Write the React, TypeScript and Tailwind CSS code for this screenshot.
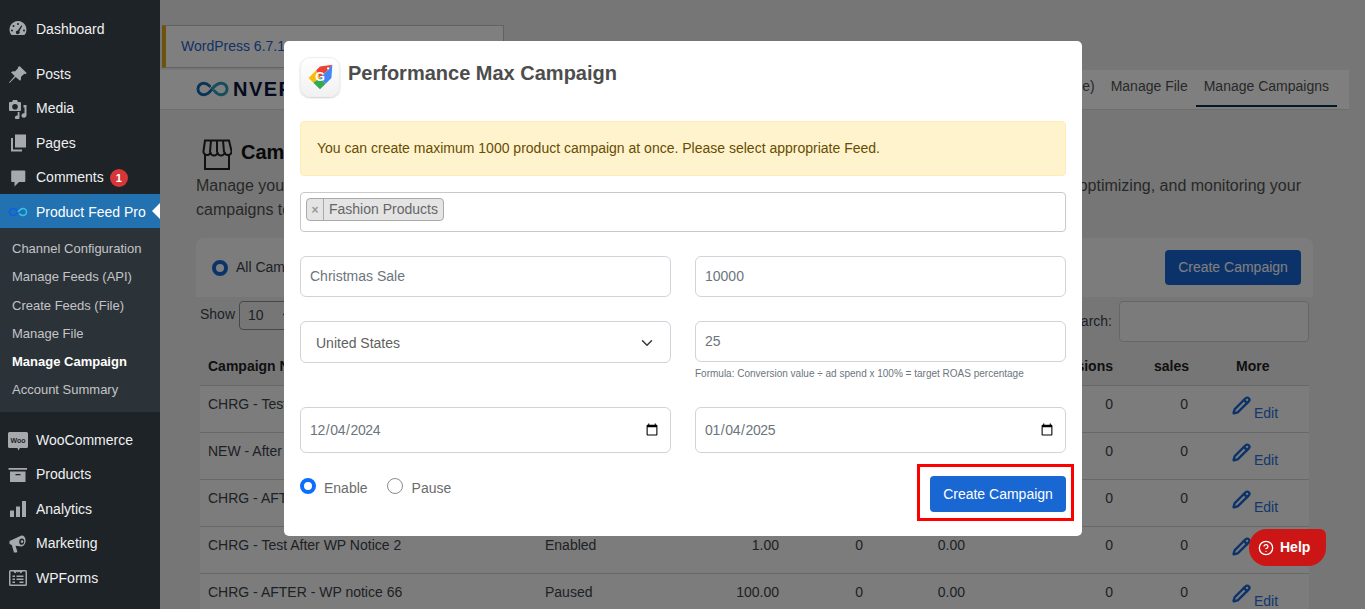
import { ChevronDown, CircleHelp, Pencil } from "lucide-react";
import { ReactNode } from "react";

const sans = "font-['Liberation_Sans',Arial,sans-serif]";

function DashIcon({ children }: { children: ReactNode }) {
  return (
    <svg viewBox="0 0 20 20" className="h-5 w-5 fill-[#a7aaad]">
      {children}
    </svg>
  );
}

const icons: Record<string, ReactNode> = {
  dashboard: (
    <DashIcon>
      <path
        fillRule="evenodd"
        d="M10 2a8.500 8.500 0 0 0-7.400 12.700c.4.700 1 1.300 1.800 1.300h11.200c.8 0 1.400-.6 1.800-1.300A8.500 8.500 0 0 0 10 2zM10 4a1 1 0 1 1 0 2 1 1 0 0 1 0-2zM5.500 6a1 1 0 1 1 0 2 1 1 0 0 1 0-2zM4 10.500a1 1 0 1 1 0 2 1 1 0 0 1 0-2zM16 10.500a1 1 0 1 1 0 2 1 1 0 0 1 0-2zM13.400 6.200l.9.500-2.900 5.600a1.900 1.900 0 1 1-1.600-.9z"
      />
    </DashIcon>
  ),
  posts: (
    <DashIcon>
      <path d="M11.800 1.200l6.900 6.900-1.400 1.100-1-.5-3.400 3.300c.4 1.400.1 2.800-.9 3.800L7.700 12.100l-6.200 6-.5-.5 5.700-6.500-3.700-3.800c1-1 2.400-1.300 3.900-.9l3.300-3.300-.5-1z" />
    </DashIcon>
  ),
  media: (
    <DashIcon>
      <path fillRule="evenodd" d="M1 3h3l1-2h4l1 2h2a1 1 0 0 1 1 1v7a1 1 0 0 1-1 1H2a1 1 0 0 1-1-1V4a1 1 0 0 1 1-1zm6 2a2.800 2.800 0 1 0 0 5.600A2.800 2.800 0 0 0 7 5z" />
      <path d="M18.500 6v10.500a2.500 2.200 0 1 1-2-2.200V8.500h-1V6zM11.500 13v5.500a2.300 1.900 0 1 1-1.800-1.900V13z" />
    </DashIcon>
  ),
  pages: (
    <DashIcon>
      <path d="M7 1.500h11v13H7zM5 5v11.500h9v2H3V5z" />
    </DashIcon>
  ),
  comments: (
    <DashIcon>
      <path d="M4 2.500h12.500a.8.800 0 0 1 .8.800v10a.8.800 0 0 1-.8.800H11l-4.500 4.500v-4.500H4a.8.800 0 0 1-.8-.8v-10a.8.800 0 0 1 .8-.8z" />
    </DashIcon>
  ),
  woo: (
    <svg viewBox="0 0 20 20" className="h-5 w-5">
      <path
        className="fill-[#a7aaad]"
        d="M1.500 1h17A1.500 1.500 0 0 1 20 2.500v13a1.500 1.500 0 0 1-1.500 1.500H12l-1.800 2.500L9.500 17h-8A1.500 1.500 0 0 1 0 15.500v-13A1.500 1.500 0 0 1 1.500 1z"
      />
      <text x="10" y="11.500" textAnchor="middle" className="fill-[#1d2327] font-['Liberation_Sans'] text-[7px] font-bold">
        Woo
      </text>
    </svg>
  ),
  products: (
    <DashIcon>
      <path fillRule="evenodd" d="M.500 3h18.500v1.800H.500zM2 6.500h15.500V17H2zM7.500 9v1.200h5V9z" />
    </DashIcon>
  ),
  analytics: (
    <DashIcon>
      <path d="M2 11.500h4V18H2zM8 7.500h4V18H8zM14 2h4v16h-4z" />
    </DashIcon>
  ),
  marketing: (
    <DashIcon>
      <path fillRule="evenodd" d="M13.500 1.500a4 5.500 10 0 1 0 11l-6-.8 1.800 5.800-.7 1H6l-2.200-7.500L1.500 10V7zM14 4.500a2.500 3.200 10 1 0 0 6.300 2.500 3.200 10 0 0 0-6.300z" />
      <circle cx="14" cy="7.600" r="1.300" />
    </DashIcon>
  ),
  wpforms: (
    <DashIcon>
      <path
        fillRule="evenodd"
        d="M2.500 2h15A1.500 1.500 0 0 1 19 3.500v13a1.500 1.500 0 0 1-1.500 1.500h-15A1.500 1.500 0 0 1 1 16.500v-13A1.500 1.500 0 0 1 2.500 2zM2.500 3.500v13h15v-13h-3l-1.500 2L11 3.500 10 4.800 9 3.500 7 5.500 5.500 3.500zM4.500 7.500V9H7V7.500zM8.500 7.500V9h7V7.500zM4.500 10.500V12H7v-1.500zM8.500 10.500V12h7v-1.500zM11.500 13.500V15h4v-1.500zM4.500 13.500V15H7v-1.500z"
      />
    </DashIcon>
  ),
};

function MenuRow({ icon, label, badge }: { icon: string; label: string; badge?: string }) {
  return (
    <div className="flex h-[34.4px] items-center pl-2 pt-[2px] text-[14px] text-[#f0f0f1]">
      <span className="flex w-[28px] shrink-0 items-center">{icons[icon]}</span>
      <span>{label}</span>
      {badge && (
        <span className="ml-[6px] flex h-[18px] w-[18px] items-center justify-center rounded-full bg-[#d63638] text-[11px] font-bold text-white">
          {badge}
        </span>
      )}
    </div>
  );
}

function Sidebar() {
  const sub = ["Channel Configuration", "Manage Feeds (API)", "Create Feeds (File)", "Manage File", "Manage Campaign", "Account Summary"];
  return (
    <aside className="flex w-[160px] shrink-0 flex-col bg-[#1d2327] pt-[11px]">
      <MenuRow icon="dashboard" label="Dashboard" />
      <div className="h-[11px]" />
      <MenuRow icon="posts" label="Posts" />
      <MenuRow icon="media" label="Media" />
      <MenuRow icon="pages" label="Pages" />
      <MenuRow icon="comments" label="Comments" badge="1" />
      <div className="relative flex h-[34.4px] items-center bg-[#2271b1] pl-2 pt-[2px] text-[14px] text-white">
        <span className="flex w-[28px] shrink-0 items-center">
          <svg viewBox="0 0 20 10" className="h-[10px] w-5" fill="none" strokeWidth="1.500">
            <path d="M9 3.500C8 2 6.500 1.500 5 1.500a3.500 3.500 0 0 0 0 7c2.500 0 4-2.300 5-3.500" stroke="#0b5fe8" />
            <path d="M10 5c1-1.200 2.500-3.500 5-3.500a3.500 3.500 0 0 1 0 7c-1.500 0-2.800-.7-3.800-2" stroke="#34c3ee" />
          </svg>
        </span>
        Product Feed Pro
        <span className="absolute right-0 top-[9px] h-0 w-0 border-y-[8px] border-r-[8px] border-y-transparent border-r-white" />
      </div>
      <div className="flex flex-col bg-[#2c3338] pb-[8px] pt-[6.800px] text-[13px] leading-[28.200px]">
        {sub.map((s) => (
          <div key={s} className={s === "Manage Campaign" ? "pl-3 font-bold text-white" : "pl-3 text-[#c3c4c7]"}>
            {s}
          </div>
        ))}
      </div>
      <div className="h-[10px]" />
      <MenuRow icon="woo" label="WooCommerce" />
      <MenuRow icon="products" label="Products" />
      <MenuRow icon="analytics" label="Analytics" />
      <MenuRow icon="marketing" label="Marketing" />
      <MenuRow icon="wpforms" label="WPForms" />
    </aside>
  );
}

const rows = [
  ["CHRG - Test After WP Notice", "Enabled", "1.00"],
  ["NEW - After WP Notice", "Enabled", "1.00"],
  ["CHRG - AFTER - WP notice", "Paused", "1.00"],
  ["CHRG - Test After WP Notice 2", "Enabled", "1.00"],
  ["CHRG - AFTER - WP notice 66", "Paused", "100.00"],
];

function Background() {
  return (
    <main className="h-full min-w-0 flex-1 bg-[#ececed] pt-[25px] text-[14px] text-[#3c434a]">
      <div className="ml-[2px] flex h-[43px] w-[342px] items-center border border-l-4 border-[#c3c4c7] border-l-[#dba617] bg-white pl-[15px] text-[#2563c8]">
        WordPress 6.7.1
      </div>
      <header className="mt-[2px] flex h-[40px] w-[1189px] items-start justify-between border-b border-[#dcdcde] bg-white pl-[36px]">
        <div className="flex h-[37px] items-center gap-[4px] pt-[1px]">
          <svg viewBox="0 0 34 16" className="h-[16px] w-[33px]" fill="none" strokeWidth="3" strokeLinecap="round">
            <path d="M14 5C12 3 10 2 8 2a6 6 0 0 0 0 12c4.500 0 7-4 9-6.500" stroke="#1569ab" />
            <path d="M17 7.500C19 5 21.500 2 26 2a6 6 0 0 1 0 12c-3 0-5-1.500-7-4" stroke="#2a9cb8" />
          </svg>
          <span className="text-[20px] font-bold tracking-[1.500px] text-[#0c1440]">NVERSIOS</span>
        </div>
        <nav className="flex items-start pr-[12px] text-[14px] text-[#515151]">
          <span className="flex h-[37px] items-center px-2 pb-[4px]">Manage Feeds (File)</span>
          <span className="flex h-[37px] items-center px-2 pb-[4px]">Manage File</span>
          <span className="flex h-[37px] items-center border-b-2 border-[#09304a] px-2 pb-[2px]">Manage Campaigns</span>
        </nav>
      </header>
      <section className="px-[36px] pt-[29px]">
        <div className="flex h-[32px] items-center gap-[9px] pl-[4px]">
          <svg viewBox="0 0 32 32" className="h-[32px] w-[32px]" fill="none" stroke="#222" strokeWidth="2">
            <path d="M5 15v15h24V15" />
            <path d="M5 1.500h24l2.500 10.500a3.400 3.400 0 0 1-7 1 3.400 3.400 0 0 1-7 0 3.400 3.400 0 0 1-7 0 3.400 3.400 0 0 1-7-1z" />
            <path d="M11 1.500l-1 11.500M17 1.500v11.500M23 1.500l1 11.500" />
          </svg>
          <h1 className="mb-[6px] text-[20px] font-bold text-[#111]">Campaign Management</h1>
        </div>
        <div className="mt-[3px] w-[1105px] text-[16px] leading-[24px] text-[#515151]">
          <div className="flex justify-between">
            <span>Manage your Performance Max campaigns in one place, creating,</span>
            <span>optimizing, and monitoring your</span>
          </div>
          <div>campaigns to get the best results.</div>
        </div>
      </section>
      <section className="ml-[36px] mt-[16px] w-[1117px] overflow-hidden rounded-t-[8px] bg-[#ececed]">
        <div className="flex h-[59px] items-center justify-between bg-[#f8f9fa] pl-4 pr-3">
          <div className="flex items-center gap-2">
            <span className="h-4 w-4 rounded-full border-[4px] border-[#1967d2] bg-white" />
            All Campaigns
          </div>
          <button className="h-[35px] w-[136px] rounded-[4px] bg-[#1967d2] text-white">Create Campaign</button>
        </div>
        <div className="flex h-[48px] items-start justify-between pl-1 pr-1 pt-1">
          <div className="flex items-center gap-[4px]">
            <span className="mb-[2px]">Show</span>
            <span className="flex h-[29px] w-[60px] items-center justify-between rounded-[4px] border border-[#8c8f94] pl-2 pr-1">
              10 <ChevronDown size={14} />
            </span>
          </div>
          <div className="flex items-center gap-[7px]">
            Search:
            <span className="h-[41px] w-[190px] rounded-[4px] border border-[#ccc] bg-[#f6f6f6]" />
          </div>
        </div>
        <table className="ml-1 w-[1109px] table-fixed border-collapse">
          <thead>
            <tr className="h-[40px] border-b border-[#d0d0d0] font-bold text-[#222]">
              <th className="w-[337px] pl-2 pt-[4px] text-left">Campaign Name</th>
              <th className="w-[170px] pl-2 pt-[4px] text-left">Status</th>
              <th className="w-[80px] pr-2 pt-[4px] text-right">Budget</th>
              <th className="w-[84px] pr-2 pt-[4px] text-right">Clicks</th>
              <th className="w-[102px] pr-2 pt-[4px] text-right">CTR</th>
              <th className="w-[148px] pr-2 pt-[4px] text-right">Conversions</th>
              <th className="w-[75px] pr-[7px] pt-[4px] text-right">sales</th>
              <th className="pl-[40px] pt-[4px] text-left">More</th>
            </tr>
          </thead>
          <tbody>
            {rows.map((r) => (
              <tr key={r[0]} className="h-[47px] border-b border-[#d0d0d0] bg-[#f8f8f8] align-top">
                <td className="pl-2 pt-[8px]">{r[0]}</td>
                <td className="pl-2 pt-[8px]">{r[1]}</td>
                <td className="pr-2 pt-[8px] text-right">{r[2]}</td>
                <td className="pr-2 pt-[8px] text-right">0</td>
                <td className="pr-2 pt-[8px] text-right">0.00</td>
                <td className="pr-2 pt-[8px] text-right">0</td>
                <td className="pr-2 pt-[8px] text-right">0</td>
                <td className="pl-[36px] pt-[10px]">
                  <span className="flex items-start gap-[3px] text-[#2a6fd6]">
                    <Pencil size={19} strokeWidth={3} color="#1967d2" />
                    <span className="mt-[7px]">Edit</span>
                  </span>
                </td>
              </tr>
            ))}
          </tbody>
        </table>
      </section>
    </main>
  );
}

function TextField({ value }: { value: string }) {
  return (
    <input
      readOnly
      value={value}
      className="h-[41px] w-full rounded-[6px] border border-[#ced4da] bg-white pb-[2px] pl-[9px] pr-[10px] text-[14px] text-[#6c757d] outline-none"
    />
  );
}

function DateField({ value }: { value: string }) {
  return (
    <input
      type="date"
      defaultValue={value}
      className="h-[46px] w-full rounded-[6px] border border-[#ced4da] bg-white pl-[8px] pr-[9px] text-[14px] tracking-[-0.4px] text-[#6c757d] outline-none"
    />
  );
}

function Modal() {
  return (
    <div className="absolute left-[284px] top-[41px] flex h-[495px] w-[798px] flex-col rounded-[5px] bg-white p-4 text-[14px] text-[#6c6c6c]">
      <div className="flex h-[40px] items-start gap-2">
        <div className="h-[40px] w-[40px] rounded-[10px] border border-[#eee] bg-linear-to-b from-white to-[#f1f1f1] shadow-[0_1px_2px_rgba(0,0,0,0.2)]">
          <svg viewBox="0 0 40 40" className="h-[38px] w-[38px]">
            <path d="M8 21l8-8 4 8-7 5z" fill="#fbbc04" />
            <path d="M16 13l4-4 13-2-5 6-8 8z" fill="#ea4335" />
            <path d="M33 7l-1 14-6 6-6-6 8-8z" fill="#4285f4" />
            <path d="M13 26l7-5 6 6-6 6z" fill="#34a853" />
            <circle cx="28.500" cy="11" r="1.200" fill="#fff" />
            <text x="20" y="24.500" textAnchor="middle" className="fill-white font-['Liberation_Sans'] text-[13px] font-bold">
              G
            </text>
          </svg>
        </div>
        <h2 className="mt-[4px] text-[20px] font-bold leading-[24px] text-[#4d4d4d]">Performance Max Campaign</h2>
      </div>
      <div className="mt-[24px] flex h-[55px] items-center rounded-[4px] border border-[#ffecb5] bg-[#fff3cd] pl-4 text-[#664d03]">
        You can create maximum 1000 product campaign at once. Please select appropriate Feed.
      </div>
      <div className="mt-4 flex h-[40px] items-start rounded-[4px] border border-[#c9c9c9] pl-[5px] pt-[5px]">
        <span className="flex h-[23px] items-stretch rounded-[4px] border border-[#aaa] bg-[#e4e4e4] text-[#666]">
          <span className="flex w-[17px] items-center justify-center border-r border-[#aaa] text-[12px] font-bold text-[#999]">×</span>
          <span className="flex items-center pl-[5px] pr-[5px]">Fashion Products</span>
        </span>
      </div>
      <div className="mt-6 grid grid-cols-2 gap-x-6">
        <TextField value="Christmas Sale" />
        <TextField value="10000" />
        <div className="relative mt-6">
          <select className="h-[42px] w-full appearance-none rounded-[6px] border border-[#ced4da] bg-white pl-[15px] pt-[2px] text-[14px] text-[#5f5f5f] outline-none">
            <option>United States</option>
          </select>
          <ChevronDown size={18} strokeWidth={2} className="pointer-events-none absolute right-[15px] top-[13px] text-[#343a40]" />
        </div>
        <div className="mt-6">
          <TextField value="25" />
          <p className="mt-[5px] text-[10px] leading-[13px] text-[#6c757d]">Formula: Conversion value ÷ ad spend x 100% = target ROAS percentage</p>
        </div>
        <div className="mt-[27px]">
          <DateField value="2024-12-04" />
        </div>
        <div className="mt-[27px]">
          <DateField value="2025-01-04" />
        </div>
      </div>
      <div className="flex flex-1 items-start justify-between">
        <div className="mt-[25px] flex items-start leading-[20px]">
          <span className="h-4 w-4 rounded-full border-[4px] border-[#0d6efd] bg-white" />
          <span className="ml-2">Enable</span>
          <span className="ml-[19px] h-4 w-4 rounded-full border border-[#8c8c8c] bg-white" />
          <span className="ml-[9px]">Pause</span>
        </div>
        <button className="mt-[23px] h-[36px] w-[136px] rounded-[4px] bg-[#1967d2] text-[14px] text-white">Create Campaign</button>
      </div>
    </div>
  );
}

export default function App() {
  return (
    <div className={`relative flex h-[609px] w-[1365px] overflow-hidden ${sans}`}>
      <Sidebar />
      <Background />
      <div className="absolute inset-y-0 left-[160px] right-0 bg-black/50" />
      <Modal />
      <div className="absolute left-[917px] top-[464px] h-[57px] w-[157px] border-[3px] border-[#ff0000]" />
      <div className="absolute left-[1249px] top-[529px] flex h-[37px] w-[77px] items-center gap-[6px] rounded-[18px] rounded-tr-[6px] bg-[#cc1515] pl-[9px] text-[14px] font-bold text-white">
        <CircleHelp size={16} />
        Help
      </div>
    </div>
  );
}
